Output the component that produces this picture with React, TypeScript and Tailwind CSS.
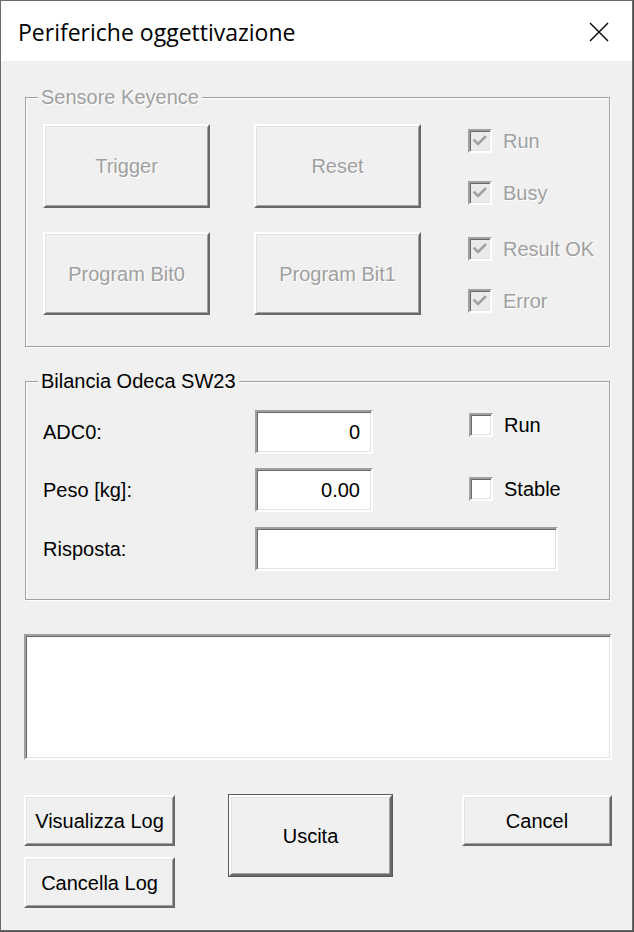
import React from 'react';

const raised =
  'bg-[#f0f0f0] border-2 border-t-white border-l-white border-r-[#696969] border-b-[#696969] shadow-[inset_1px_1px_0_#e3e3e3,inset_-1px_-1px_0_#a0a0a0]';
const sunken =
  'border-2 border-t-[#a0a0a0] border-l-[#a0a0a0] border-r-white border-b-white shadow-[inset_1px_1px_0_#696969,inset_-1px_-1px_0_#e3e3e3]';
const grayText = 'text-[#a0a0a0] [text-shadow:1px_1px_0_#ffffff]';

function Button({ label, disabled, className = '' }: { label: string; disabled?: boolean; className?: string }) {
  return (
    <div className={`shrink-0 flex items-center justify-center ${raised} ${className}`}>
      <span className={disabled ? grayText : 'text-black'}>{label}</span>
    </div>
  );
}

function Check({ label, checked, disabled, className = '' }: { label: string; checked?: boolean; disabled?: boolean; className?: string }) {
  return (
    <div className={`flex items-center gap-[11px] ${className}`}>
      <div className={`w-[24px] h-[24px] flex items-center justify-center ${sunken} ${disabled ? 'bg-[#ebebeb]' : 'bg-white'}`}>
        {checked && (
          <svg width="16" height="16" viewBox="0 0 16 16">
            <path d="M2.5 7.5 L6 11 L13 4" fill="none" stroke={disabled ? '#a0a0a0' : '#000'} strokeWidth="2.6" strokeLinecap="square" />
          </svg>
        )}
      </div>
      <span className={`leading-[24px] ${disabled ? grayText : 'text-black'}`}>{label}</span>
    </div>
  );
}

function Group({ title, disabled, className = '', children }: { title: string; disabled?: boolean; className?: string; children: React.ReactNode }) {
  return (
    <div className={`relative ml-[1px] w-[585px] border border-[#a0a0a0] shadow-[inset_1px_1px_0_#ffffff,1px_1px_0_#ffffff] ${className}`}>
      <span className={`absolute left-[12px] top-[-14px] px-[3px] bg-[#f0f0f0] leading-[26px] ${disabled ? grayText : 'text-black'}`}>
        {title}
      </span>
      {children}
    </div>
  );
}

function Field({ value, className = '' }: { value: string; className?: string }) {
  return (
    <div className={`h-[44px] bg-white flex items-center justify-end pr-[11px] ${sunken} ${className}`}>
      <span className="text-black">{value}</span>
    </div>
  );
}

export default function App() {
  return (
    <div className="w-[634px] h-[932px] bg-[#4d4d4d]">
      <div className="w-[633px] h-[931px] border border-[#6a6a6a] bg-[#f0f0f0] flex flex-col">
        {/* title bar */}
        <div className="h-[60px] bg-white flex items-center justify-between pl-[17px] pr-[23px]">
          <span className="font-['Open_Sans','Noto_Sans',sans-serif] text-[23px] text-black pt-[3px]">Periferiche oggettivazione</span>
          <svg width="20" height="20" viewBox="0 0 20 20" className="mt-[2px]">
            <path d="M1 1 L19 19 M19 1 L1 19" stroke="#000" strokeWidth="1.4" fill="none" />
          </svg>
        </div>

        <div className="flex flex-col pl-[23px] pr-[20px] font-['Liberation_Sans',Arial,sans-serif] text-[20px]">
          {/* Sensore Keyence */}
          <Group title="Sensore Keyence" disabled className="mt-[36px] h-[250px]">
            <div className="flex pl-[17px] pt-[26px]">
              <div className="grid grid-cols-[167px_167px] gap-x-[44px] gap-y-[24px]">
                <Button label="Trigger" disabled className="h-[84px]" />
                <Button label="Reset" disabled className="h-[84px]" />
                <Button label="Program Bit0" disabled className="h-[83px]" />
                <Button label="Program Bit1" disabled className="h-[83px]" />
              </div>
              <div className="flex flex-col ml-[47px] pt-[5px]">
                <Check label="Run" checked disabled />
                <Check label="Busy" checked disabled className="mt-[28px]" />
                <Check label="Result OK" checked disabled className="mt-[32px]" />
                <Check label="Error" checked disabled className="mt-[28px]" />
              </div>
            </div>
          </Group>

          {/* Bilancia */}
          <Group title="Bilancia Odeca SW23" className="mt-[34px] h-[219px]">
            <div className="flex flex-col pl-[17px] pt-[28px]">
              <div className="flex items-start">
                <span className="w-[212px] h-[44px] flex items-center">ADC0:</span>
                <Field value="0" className="w-[118px]" />
                <Check label="Run" className="ml-[96px] mt-[3px]" />
              </div>
              <div className="flex items-start mt-[14px]">
                <span className="w-[212px] h-[44px] flex items-center">Peso [kg]:</span>
                <Field value="0.00" className="w-[118px]" />
                <Check label="Stable" className="ml-[96px] mt-[9px]" />
              </div>
              <div className="flex items-start mt-[15px]">
                <span className="w-[212px] h-[44px] flex items-center">Risposta:</span>
                <Field value="" className="w-[303px]" />
              </div>
            </div>
          </Group>

          {/* log */}
          <div className={`mt-[34px] w-[588px] h-[126px] bg-white ${sunken}`} />

          {/* bottom buttons */}
          <div className="flex items-start mt-[34px]">
            <div className="shrink-0 flex flex-col gap-[11px] mt-[1px]">
              <Button label="Visualizza Log" className="w-[151px] h-[51px]" />
              <Button label="Cancella Log" className="w-[151px] h-[51px]" />
            </div>
            <div className="shrink-0 ml-[53px] w-[165px] h-[83px] border border-[#5a5a5a] flex">
              <Button label="Uscita" className="flex-1" />
            </div>
            <Button label="Cancel" className="ml-[69px] mt-[1px] w-[150px] h-[51px]" />
          </div>
        </div>
      </div>
    </div>
  );
}
